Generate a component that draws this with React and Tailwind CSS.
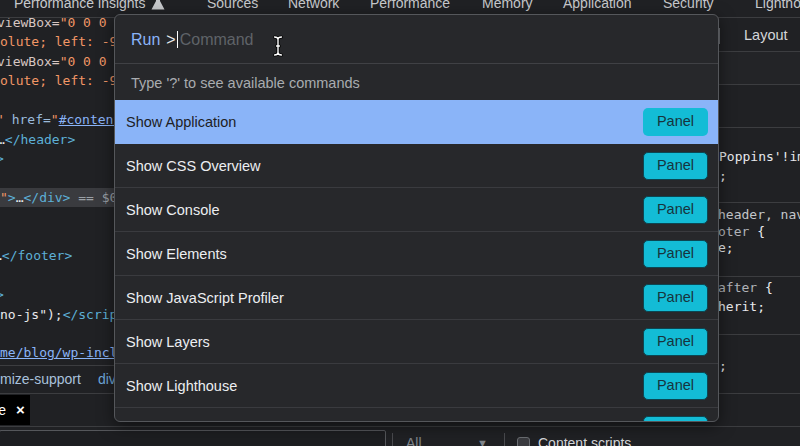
import React from "react";

const mono = "font-['DejaVu_Sans_Mono',monospace]";

const K = {
  tag: "text-[#5db0d7]",
  an: "text-[#9bbbdc]",
  av: "text-[#f29766]",
  tx: "text-[#e8eaed]",
  gr: "text-[#9aa0a6]",
  ln: "text-[#8ab4f8] underline",
  vb: "text-[#d7c6c2]",
};

const codeLines = [
  { ml: "-ml-[3px]", parts: [[K.vb, "viewBox="], [K.av, '"0 0 0 0" aria-hidden="true"']] },
  { ml: "ml-0", parts: [[K.av, 'olute; left: -9999px;"']] },
  { ml: "-ml-[3px]", parts: [[K.vb, "viewBox="], [K.av, '"0 0 0 0" aria-hidden="true"']] },
  { ml: "ml-0", parts: [[K.av, 'olute; left: -9999px;"']] },
  { ml: "ml-0", parts: [] },
  { ml: "-ml-[4px]", parts: [[K.av, '"'], [K.an, " href="], [K.av, '"'], [K.ln, "#content"], [K.av, '"']] },
  { ml: "-ml-[3px]", parts: [[K.tx, "…"], [K.tag, "</header>"]] },
  { ml: "-ml-[4px]", parts: [[K.tag, ">"]] },
  { ml: "ml-0", parts: [] },
  { ml: "ml-0", hl: true, parts: [[K.av, '"'], [K.tag, ">"], [K.tx, "…"], [K.tag, "</div>"], [K.gr, " == $0"]] },
  { ml: "ml-0", parts: [] },
  { ml: "ml-0", parts: [] },
  { ml: "-ml-[6px]", parts: [[K.tx, "…"], [K.tag, "</footer>"]] },
  { ml: "ml-0", parts: [] },
  { ml: "-ml-[4px]", parts: [[K.tag, ">"]] },
  { ml: "ml-0", parts: [[K.tx, 'no-js");'], [K.tag, "</script>"]] },
  { ml: "ml-0", parts: [] },
  { ml: "ml-0", parts: [[K.ln, "me/blog/wp-includes/js/wp-emoji-release.min.js"]] },
];

const commands = [
  "Show Application",
  "Show CSS Overview",
  "Show Console",
  "Show Elements",
  "Show JavaScript Profiler",
  "Show Layers",
  "Show Lighthouse",
  "Show Media",
];

function Flask() {
  return (
    <svg width="14" height="13" viewBox="0 0 14 13" className="shrink-0">
      <path d="M5 0h4v4l4.5 8.5H0.5L5 4z" fill="#c7c9cc" />
    </svg>
  );
}

function IBeam() {
  return (
    <svg width="12" height="22" viewBox="0 0 12 22">
      <g fill="none" strokeLinecap="round">
        <path
          d="M2.5 2 Q6 2 6 4.5 Q6 2 9.5 2 M6 4.5 V17.5 M2.5 20 Q6 20 6 17.5 Q6 20 9.5 20 M4.5 11 H7.5"
          stroke="#000"
          strokeWidth="3.2"
        />
        <path
          d="M2.5 2 Q6 2 6 4.5 Q6 2 9.5 2 M6 4.5 V17.5 M2.5 20 Q6 20 6 17.5 Q6 20 9.5 20 M4.5 11 H7.5"
          stroke="#fff"
          strokeWidth="1.4"
        />
      </g>
    </svg>
  );
}

export default function App() {
  return (
    <div className="relative w-[800px] h-[446px] overflow-hidden bg-[#202124] font-['Liberation_Sans',Arial,sans-serif]">
      <div className="flex flex-col h-full">
        {/* Top tab bar */}
        <div className="-mt-[10px] h-[28px] shrink-0 flex items-center pl-[14px] text-[14px] text-[#c7c9cc] border-b border-[#3c3d40] whitespace-nowrap">
          <div className="w-[193px] shrink-0 flex items-center gap-[5px]">
            <span>Performance insights</span>
            <Flask />
          </div>
          <div className="w-[81px] shrink-0">Sources</div>
          <div className="w-[82px] shrink-0">Network</div>
          <div className="w-[112px] shrink-0">Performance</div>
          <div className="w-[81px] shrink-0">Memory</div>
          <div className="w-[100px] shrink-0">Application</div>
          <div className="w-[92px] shrink-0">Security</div>
          <div className="shrink-0">Lighthouse</div>
        </div>

        {/* Main split */}
        <div className="h-[375px] shrink-0 flex">
          {/* Elements panel */}
          <div className="w-[400px] shrink-0 flex flex-col border-r border-[#3c3d40]">
            <div className="flex-1 overflow-hidden">
              <div className={`-mt-[5px] leading-[19.45px] text-[13px] ${mono}`}>
                {codeLines.map((l, i) => (
                  <div
                    key={i}
                    className={`h-[19.45px] whitespace-pre ${l.hl ? "bg-[#3a3b3f]" : ""}`}
                  >
                    <div className={l.ml}>
                      {l.parts.map((p, j) => (
                        <span key={j} className={p[0]}>
                          {p[1]}
                        </span>
                      ))}
                    </div>
                  </div>
                ))}
              </div>
            </div>
            <div className="h-[28px] shrink-0 border-t border-[#3c3d40] flex items-center gap-[17px] text-[14px] whitespace-nowrap">
              <span className="text-[#a9c1dc]">mize-support</span>
              <span className="text-[#6fa8dc]">div</span>
            </div>
          </div>

          {/* Styles panel */}
          <div className={`flex-1 flex flex-col text-[13px] ${mono} whitespace-pre`}>
            <div className="h-[34px] shrink-0 border-b border-[#3c3d40] flex items-center pt-[3px]">
              <div className="ml-[319px] w-px h-[16px] bg-[#6b6e73]" />
              <div className="ml-[24px] text-[14.5px] text-[#d4d6d9] font-['Liberation_Sans',Arial,sans-serif]">
                Layout
              </div>
            </div>
            <div className="h-[33px] shrink-0 border-b border-[#3c3d40] bg-[#232427]" />
            <div className="h-[43px] shrink-0 border-b border-[#3c3d40]" />
            <div className="h-[75px] shrink-0 border-b border-[#3c3d40] pt-[19px] leading-[19px] pl-[319px] text-[#e8eaed]">
              <div>Poppins'!important;</div>
              <div>;</div>
            </div>
            <div className="h-[74px] shrink-0 border-b border-[#3c3d40] pt-[4px] leading-[16.5px] pl-[318px]">
              <div className="text-[#c3c6ca]">header, nav</div>
              <div>
                <span className="text-[#b0b3b8]">oter </span>
                <span className="text-[#e8eaed]">{"{"}</span>
              </div>
              <div className="text-[#e8eaed]">e;</div>
            </div>
            <div className="h-[58px] shrink-0 border-b border-[#3c3d40] pt-[1px] leading-[19px] pl-[318px]">
              <div>
                <span className="text-[#b0b3b8]">after </span>
                <span className="text-[#e8eaed]">{"{"}</span>
              </div>
              <div className="text-[#e8eaed]">herit;</div>
            </div>
            <div className="h-[58px] shrink-0 pt-[21px] leading-[19px] pl-[319px] text-[#e8eaed]">
              <div>;</div>
            </div>
          </div>
        </div>

        {/* Drawer tab strip */}
        <div className="h-[34px] shrink-0 border-t border-b border-[#3c3d40] flex items-center">
          <div className="h-[30px] bg-black flex items-center pr-[5px] text-[14px] text-white whitespace-nowrap">
            <span className="w-[6px] overflow-hidden flex justify-end">Coverage</span>
            <span className="ml-[10px] text-[15px] font-bold">×</span>
          </div>
        </div>

        {/* Drawer toolbar */}
        <div className="flex-1 flex items-start whitespace-nowrap text-[14px] leading-[16px]">
          <div className="-ml-[1px] mt-[3px] w-[387px] h-[24px] shrink-0 border border-[#55575b] rounded-[2px] bg-[#1d1e21]" />
          <div className="ml-[6px] mt-[6px] w-px h-[20px] bg-[#4a4b4f] shrink-0" />
          <div className="ml-[13px] mt-[8px] w-[84px] pr-[2px] flex justify-between text-[#80868b] shrink-0">
            <span>All</span>
            <span className="text-[11px]">▼</span>
          </div>
          <div className="ml-[14px] mt-[6px] w-px h-[20px] bg-[#4a4b4f] shrink-0" />
          <div className="ml-[12px] mt-[10px] w-[13px] h-[13px] rounded-[3px] border border-[#6b6e73] bg-[#3a3b3f] shrink-0" />
          <div className="ml-[8px] mt-[8px] text-[#d4d6d9]">Content scripts</div>
        </div>
      </div>

      {/* Command menu */}
      <div className="absolute left-[114px] top-[14px] w-[605px] h-[408px] rounded-[6px] border border-[#55575b] bg-[#27282b] overflow-hidden shadow-[0_4px_16px_rgba(0,0,0,0.5)] flex flex-col">
        <div className="h-[49px] shrink-0 border-b border-[#404145] flex items-center pl-[16px] pt-[1px] text-[16px] whitespace-nowrap">
          <span className="text-[#8ab4f8]">Run</span>
          <span className="ml-[6px] text-[#e8eaed]">&gt;</span>
          <span className="ml-[1px] w-px h-[17px] bg-white" />
          <span className="ml-[2px] text-[#5f6368]">Command</span>
        </div>
        <div className="absolute left-[157px] top-[20px]">
          <IBeam />
        </div>
        <div className="h-[36px] shrink-0 flex items-center pl-[16px] pt-[3px] text-[14.5px] text-[#a9acb0]">
          Type '?' to see available commands
        </div>
        {commands.map((c, i) => (
          <div
            key={c}
            className={`h-[44px] shrink-0 flex items-center justify-between pl-[11px] pr-[10px] text-[14.5px] ${
              i === 0
                ? "bg-[#8ab4f8] text-[#202124]"
                : "border-b border-[#3a3b3f] text-[#eceef1]"
            }`}
          >
            <span className="pt-[2px]">{c}</span>
            <span
              className={`w-[65px] h-[28px] rounded-[5px] flex items-center justify-center bg-[#13bcd6] text-[#17343d] text-[14.5px] ${
                i === 0 ? "" : "border border-[#0b4652]"
              }`}
            >
              Panel
            </span>
          </div>
        ))}
      </div>
    </div>
  );
}
